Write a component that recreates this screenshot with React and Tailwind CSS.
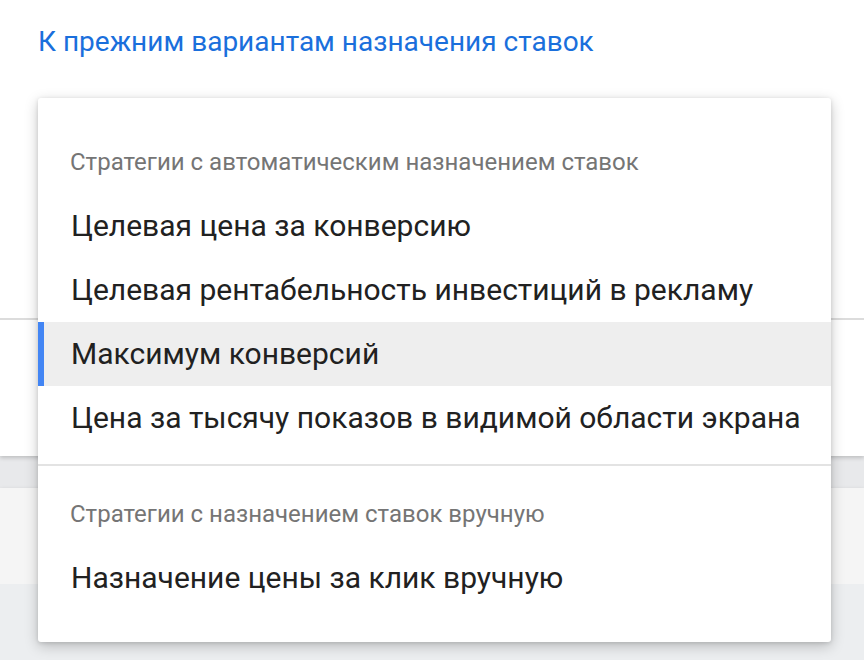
import React from 'react'

const autoItems = [
  'Целевая цена за конверсию',
  'Целевая рентабельность инвестиций в рекламу',
  'Максимум конверсий',
  'Цена за тысячу показов в видимой области экрана',
]

function MenuItem({ label, active }) {
  return (
    <div
      className={`relative flex h-[64px] items-center pl-[33px] text-[30px] text-[#212121] ${
        active ? 'bg-[#eeeeee]' : ''
      }`}
    >
      {active && <span className="absolute left-0 top-0 h-full w-[6px] bg-[#4285f4]" />}
      <span className="-mt-[2px]">{label}</span>
    </div>
  )
}

export default function App() {
  return (
    <div className="relative h-[660px] w-[864px] overflow-hidden bg-[#eceef0] font-['Roboto',sans-serif]">
      {/* page behind the menu */}
      <div className="flex h-full flex-col">
        <div className="relative z-[1] h-[456px] bg-white shadow-[0_2px_4px_rgba(0,0,0,0.18)]">
          <div className="h-[318px] pl-[38px] pt-[24px]">
            <a className="text-[28px] leading-[36px] text-[#1a6fdc]">
              К прежним вариантам назначения ставок
            </a>
          </div>
          <div className="h-[138px] border-t-2 border-[#dcdcdc]" />
        </div>
        <div className="h-[32px] bg-[#e8e9eb]" />
        <div className="h-[96px] bg-[#f5f5f5] shadow-[0_2px_4px_rgba(0,0,0,0.25)]" />
        <div className="flex-1 bg-[#eceef0]" />
      </div>

      {/* dropdown menu */}
      <div className="absolute left-[38px] top-[98px] z-10 w-[793px] rounded-[3px] bg-white pb-[32px] pt-[32px] shadow-[0_4px_14px_rgba(0,0,0,0.22),0_1px_4px_rgba(0,0,0,0.12)]">
        <div className="flex h-[64px] items-center pl-[32px] text-[24px] text-[#757575]">
          Стратегии с автоматическим назначением ставок
        </div>
        {autoItems.map((item) => (
          <MenuItem key={item} label={item} active={item === 'Максимум конверсий'} />
        ))}
        <div className="mb-[16px] mt-[14px] h-[2px] bg-[#e3e3e3]" />
        <div className="flex h-[64px] items-center pl-[32px] text-[24px] text-[#757575]">
          Стратегии с назначением ставок вручную
        </div>
        <MenuItem label="Назначение цены за клик вручную" />
      </div>
    </div>
  )
}
